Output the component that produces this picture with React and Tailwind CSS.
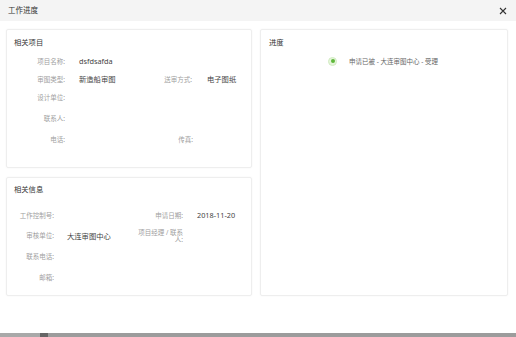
import React from "react";

const font = { fontFamily: '"Noto Sans", "Noto Sans CJK SC", sans-serif' };

function Label({ children, w }) {
  return (
    <div className={`${w} shrink-0 text-right text-[6.5px] leading-[7px] text-[#a0a0a0]`}>{children}</div>
  );
}

function Value({ children, w }) {
  return <div className={`${w} shrink-0 text-[7.3px] leading-[8px] text-[#444]`}>{children}</div>;
}

export default function App() {
  return (
    <div className="w-[516px] h-[337px] bg-white flex flex-col overflow-hidden" style={font}>
      <div className="h-[21px] shrink-0 bg-[#f4f4f4] flex items-center justify-between pl-[8px] pr-[9px]">
        <span className="text-[7.5px] text-[#333] leading-none">工作进度</span>
        <svg width="8" height="8" viewBox="0 0 8 8" className="mt-[1px]">
          <path d="M1 1 L7 7 M7 1 L1 7" stroke="#333" strokeWidth="1.1" />
        </svg>
      </div>
      <div className="flex-1 flex gap-[8px] pl-[6px] pr-[8px] pt-[8px]">
        <div className="w-[246px] flex flex-col gap-[9px]">
          <div className="h-[139px] border border-[#eeeeee] rounded-[2px] shadow-[0_0_2px_rgba(0,0,0,0.05)] pl-[7px] pt-[8px]">
            <div className="text-[7.3px] leading-[8px] text-[#333]">相关项目</div>
            <div className="mt-[6px] flex items-center h-[18px]">
              <Label w="w-[51px]">项目名称:</Label>
              <div className="w-[14px] shrink-0" />
              <Value w="w-[73px]">dsfdsafda</Value>
            </div>
            <div className="flex items-center h-[18px]">
              <Label w="w-[51px]">审图类型:</Label>
              <div className="w-[14px] shrink-0" />
              <Value w="w-[73px]">新造船审图</Value>
              <Label w="w-[40px]">送审方式:</Label>
              <div className="w-[15px] shrink-0" />
              <Value w="w-[40px]">电子图纸</Value>
            </div>
            <div className="flex items-center h-[18px]">
              <Label w="w-[51px]">设计单位:</Label>
            </div>
            <div className="flex items-center h-[24px]">
              <Label w="w-[51px]">联系人:</Label>
            </div>
            <div className="flex items-center h-[18px]">
              <Label w="w-[51px]">电话:</Label>
              <div className="w-[14px] shrink-0" />
              <div className="w-[73px] shrink-0" />
              <Label w="w-[41px]">传真:</Label>
            </div>
          </div>
          <div className="h-[119px] border border-[#eeeeee] rounded-[2px] shadow-[0_0_2px_rgba(0,0,0,0.05)] pl-[7px] pt-[7px]">
            <div className="text-[7.3px] leading-[8px] text-[#333]">相关信息</div>
            <div className="mt-[12px] flex items-center h-[20px]">
              <Label w="w-[40px]">工作控制号:</Label>
              <div className="w-[13px] shrink-0" />
              <div className="w-[70px] shrink-0" />
              <Label w="w-[46px]">申请日期:</Label>
              <div className="w-[14px] shrink-0" />
              <Value w="w-[50px]">2018-11-20</Value>
            </div>
            <div className="flex items-center h-[21px]">
              <Label w="w-[40px]">审核单位:</Label>
              <div className="w-[13px] shrink-0" />
              <Value w="w-[70px]">大连审图中心</Value>
              <Label w="w-[46px]">项目经理 / 联系人:</Label>
            </div>
            <div className="flex items-center h-[21px]">
              <Label w="w-[40px]">联系电话:</Label>
            </div>
            <div className="flex items-center h-[20px]">
              <Label w="w-[40px]">邮箱:</Label>
            </div>
          </div>
        </div>
        <div className="w-[248px] h-[267px] border border-[#eeeeee] rounded-[2px] shadow-[0_0_2px_rgba(0,0,0,0.05)] pl-[8px] pt-[8px]">
          <div className="text-[7.3px] leading-[8px] text-[#333]">进度</div>
          <div className="mt-[10px] flex items-center h-[10px] pl-[59px]">
            <div className="w-[9px] h-[9px] shrink-0 rounded-full bg-[#e6f5dc] border border-[#d2ecc2] flex items-center justify-center">
              <div className="w-[4px] h-[4px] rounded-full bg-[#5fb83a]" />
            </div>
            <div className="ml-[12px] text-[6.5px] leading-[7px] text-[#666]">申请已被 - 大连审图中心 - 受理</div>
          </div>
        </div>
      </div>
      <div className="h-[4px] shrink-0 flex">
        <div className="w-[40px] bg-[#a9a9a9]" />
        <div className="w-[8px] bg-[#666]" />
        <div className="flex-1 bg-[#9c9c9c]" />
      </div>
    </div>
  );
}
